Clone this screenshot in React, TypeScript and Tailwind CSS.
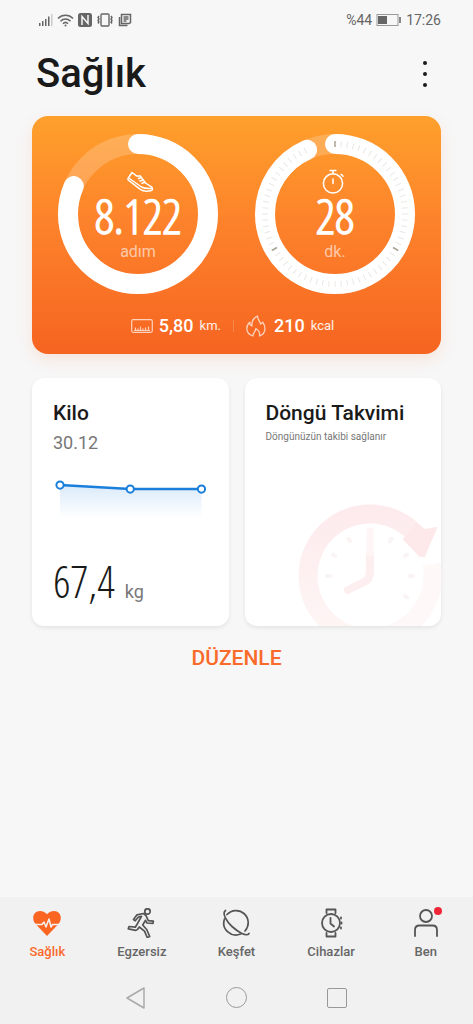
import React from 'react';

interface RingProps {
  progress: number;
  ticks?: boolean;
  label: string;
  value: string;
  unit: string;
  children: React.ReactNode;
}

const RADIUS = 70;
const LENGTH = 2 * Math.PI * RADIUS;

const Ring: React.FC<RingProps> = ({ progress, ticks, label, value, unit, children }) => (
  <div className="relative h-40 w-40" role="img" aria-label={label}>
    <svg viewBox="0 0 160 160" className="h-full w-full" fill="none">
      <circle cx="80" cy="80" r={RADIUS} stroke="#fff" strokeOpacity="0.2" strokeWidth="20" />
      <circle
        cx="80"
        cy="80"
        r={RADIUS}
        stroke="#fff"
        strokeWidth="20"
        strokeLinecap="round"
        strokeDasharray={`${LENGTH * progress} ${LENGTH}`}
        transform="rotate(-90 80 80)"
      />
      {ticks &&
        Array.from({ length: 72 }, (_, i) => i)
          .filter((i) => i <= 67)
          .map((i) => (
            <line
              key={i}
              x1="80"
              x2="80"
              y1="7"
              y2="13"
              stroke={i % 24 === 0 ? '#a9a396' : '#ebe8e4'}
              strokeWidth={i % 24 === 0 ? 1.5 : 1}
              transform={`rotate(${i * 5} 80 80)`}
            />
          ))}
    </svg>
    <div className="absolute inset-0 flex flex-col items-center pt-9 text-white">
      {children}
      <span className="font-['Open_Sans_Condensed_Light','Open_Sans_Condensed',sans-serif] text-5xl leading-[44px] font-bold">
        {value}
      </span>
      <span className="text-base leading-7 text-white/60">{unit}</span>
    </div>
  </div>
);

const ShoeIcon = () => (
  <svg viewBox="0 0 28 24" className="ml-1 h-6 w-7" fill="none" stroke="#fff" strokeWidth="1.5" strokeLinejoin="round" strokeLinecap="round">
    <path d="M6 2.5 2 8.5c-.4.7-.2 1.2.4 1.7l11.5 9c3 2 7 2.700 11.500 1.300 1.200-.5 1.500-2.300.300-3.300L19.500 13 14 5.800c-1.800.7-4 .2-5.300-1.300L6 2.500Z" />
    <path d="m3.500 8.500 12 8.500c2.500 1.500 5.500 1.800 10 1.500M12.500 8.500l3-1M14 11l3-1M16 13.200l3-1" />
  </svg>
);

const StopwatchIcon = () => (
  <svg viewBox="0 0 24 26" className="-mt-px mr-1 h-[25px] w-6" fill="none" stroke="#fff" strokeWidth="1.600" strokeLinecap="round">
    <circle cx="12" cy="15" r="10" />
    <path d="M9 1.500h6M12 2v3M20.500 5.500l2 2M12 10.500v4.500" />
  </svg>
);

const StatusBar = () => (
  <div className="flex h-10 items-center justify-between pr-8 pl-[39px] text-sm text-[#666]">
    <div className="flex items-center gap-1">
      <svg viewBox="0 0 14 14" className="h-3.5 w-3.5" fill="#666">
        <path d="M0 10h1.500v3H0zM3 8h1.500v5H3zM6 6h1.500v7H6zM9 3.500h1.500V13H9z" />
        <path d="M12 1h1.500v12H12z" fill="#ccc" />
      </svg>
      <svg viewBox="0 0 17 14" className="h-3.5 w-[17px]" fill="none" stroke="#666" strokeWidth="1.600">
        <path d="M1 5.500c4.200-4.300 10.800-4.300 15 0M3.500 8.200c3-3 7-3 10 0M6 10.700c1.500-1.500 3.500-1.500 5 0" />
        <circle cx="8.500" cy="12.500" r="1" fill="#666" stroke="none" />
      </svg>
      <svg viewBox="0 0 14 14" className="h-3.5 w-3.5" fill="none">
        <rect width="14" height="14" rx="2.500" fill="#666" />
        <path d="M4 12V3.500l6 7V2" stroke="#f7f7f7" strokeWidth="1.500" />
      </svg>
      <svg viewBox="0 0 18 14" className="h-3.5 w-[18px]" fill="none" stroke="#666" strokeWidth="1.400">
        <rect x="5" y="1" width="8" height="12" rx="1" />
        <path d="m3 3-1 1.500L3 6 2 7.500 3 9l-1 1.500M15 3l1 1.500L15 6l1 1.500L15 9l1 1.500" />
      </svg>
      <svg viewBox="0 0 14 14" className="h-3.5 w-3.5" fill="none" stroke="#666" strokeWidth="1.500">
        <path d="M3.500 1.500h9v8l-1.500 1h-7.500zM1.500 4v8.500h8M5.500 4h5M5.500 6h5M5.500 8h3" />
      </svg>
    </div>
    <div className="flex items-center gap-1">
      <span>%44</span>
      <svg viewBox="0 0 26 12" className="h-3 w-[26px]" fill="none">
        <rect x="1" y="0.500" width="21" height="11" stroke="#999" />
        <rect x="2" y="2" width="9" height="8" fill="#666" />
        <rect x="23" y="3" width="2" height="6" fill="#888" />
      </svg>
      <span>17:26</span>
    </div>
  </div>
);

const ActivityCard = () => (
  <section className="rounded-2xl bg-linear-to-b from-[#fea02c] via-[#fd822b] via-45% to-[#f66421] px-[26px] pt-[18px] pb-3 shadow-[0_6px_16px_rgba(246,100,33,0.12)]">
    <div className="flex justify-between">
      <Ring progress={0.814} label="8.122 adım" value="8.122" unit="adım">
        <ShoeIcon />
      </Ring>
      <Ring progress={0.933} ticks label="28 dk." value="28" unit="dk.">
        <StopwatchIcon />
      </Ring>
    </div>
    <div className="mt-4 flex h-8 items-center justify-center pr-2 text-white">
      <svg viewBox="0 0 22 14" className="mr-1.5 h-3.5 w-[22px]" fill="none" stroke="#fff" strokeOpacity="0.7" strokeWidth="1.200">
        <rect x="0.700" y="0.700" width="20.600" height="12.600" rx="1.500" />
        <path d="M3 11.500h16M4.500 11V8.500M7 11V9.500M9.500 11V7.500M12 11V9.500M14.500 11V8.500M17.500 11V7.500" />
      </svg>
      <span className="text-lg font-medium">5,80</span>
      <span className="ml-1.5 text-[13px] text-white/90">km.</span>
      <span className="mx-3 h-3 w-px bg-white/20" />
      <svg viewBox="0 0 20 22" className="mr-2 h-[22px] w-5" fill="none" stroke="#fff" strokeOpacity="0.7" strokeWidth="1.300" strokeLinejoin="round">
        <path d="M7 21C3 19.800.8 17 .8 13.500c0-3 1.500-5 3.200-6.200v2.500l2 1.200C5.500 6.500 7.500 3 11.500 1c-.2 3.500 2.500 4.500 3 8l2.200-1.800c3.500 5 3.300 11.300-3.200 13.800.7-3-.5-5.500-3.700-7.500.2 3-3.300 4.300-2.800 7.500Z" />
      </svg>
      <span className="text-lg font-medium">210</span>
      <span className="ml-1.5 text-[13px] text-white/90">kcal</span>
    </div>
  </section>
);

const weights = [
  { x: 7, y: 7 },
  { x: 77, y: 11 },
  { x: 148, y: 11 },
];

const WeightCard = () => (
  <section className="flex h-[248px] flex-col rounded-xl bg-white px-[21px] pt-[21px] shadow-[0_2px_4px_rgba(0,0,0,0.08)]">
    <h2 className="text-[21px] leading-7 font-medium">Kilo</h2>
    <p className="text-lg leading-8 text-[#777]">30.12</p>
    <svg viewBox="0 0 154 44" className="mt-[19px] w-full" fill="none">
      <defs>
        <linearGradient id="area" x1="0" y1="0" x2="0" y2="1">
          <stop offset="0" stopColor="#1a7fdc" stopOpacity="0.16" />
          <stop offset="1" stopColor="#1a7fdc" stopOpacity="0" />
        </linearGradient>
      </defs>
      <path d="M7 7 77 11H148V40H7Z" fill="url(#area)" />
      <path d="M7 7 77 11H148" stroke="#1a7fdc" strokeWidth="2.500" />
      {weights.map((point) => (
        <circle key={point.x} cx={point.x} cy={point.y} r="3.600" fill="#fff" stroke="#1a7fdc" strokeWidth="2" />
      ))}
    </svg>
    <p className="mt-auto mb-[18px] flex items-baseline gap-2.5">
      <span className="font-['Open_Sans_Condensed_Light','Open_Sans_Condensed',sans-serif] text-[44px] leading-[54px] font-light">
        67,4
      </span>
      <span className="text-lg text-[#777]">kg</span>
    </p>
  </section>
);

const CycleCard = () => (
  <section className="relative h-[248px] overflow-hidden rounded-xl bg-white px-[21px] pt-[21px] shadow-[0_2px_4px_rgba(0,0,0,0.08)]">
    <h2 className="text-[21px] leading-7 font-medium whitespace-nowrap">Döngü Takvimi</h2>
    <p className="text-[10px] leading-5 whitespace-nowrap text-[#777]">Döngünüzün takibi sağlanır</p>
    <svg viewBox="0 0 143 122" className="absolute right-0 bottom-0 h-[122px] w-[143px]" fill="none">
      <defs>
        <linearGradient id="dial" gradientUnits="userSpaceOnUse" x1="0" y1="0" x2="0" y2="122">
          <stop offset="0" stopColor="#fdeaec" />
          <stop offset="1" stopColor="#fef5f5" />
        </linearGradient>
      </defs>
      <path d="M72 134A62 62 0 1 1 121 34" stroke="url(#dial)" strokeWidth="19" />
      <path d="M134 60A63 63 0 0 1 72 134" stroke="#fef8f8" strokeWidth="19" />
      <path d="M138 24 126 52 122 52 106 35 118 20 127 26Z" fill="#fde8ea" stroke="#fde8ea" strokeWidth="2" strokeLinejoin="round" />
      <path d="M72 50V68Q72 75 66 78L50 86" stroke="#fdeeef" strokeWidth="8" strokeLinecap="round" strokeLinejoin="round" />
      <path d="M72 27v22" stroke="#fef6f6" strokeWidth="7" strokeLinecap="round" />
      {[-90, -60, -30, 30, 60, 90, 120].map((angle) => (
        <path key={angle} d="M72 29v3" stroke="#fbf4f4" strokeWidth="4" strokeLinecap="round" transform={`rotate(${angle} 72 72)`} />
      ))}
    </svg>
  </section>
);

const HeartIcon = () => (
  <svg viewBox="0 0 30 30" className="h-[30px] w-[30px]" fill="none">
    <path d="M15 28 3.500 16C-1 10.500 1.500 3 8 3c3 0 5.500 1.300 7 3.300C16.500 4.300 19 3 22 3c6.500 0 9 7.500 4.500 13L15 28Z" fill="#fb6522" />
    <path d="M2 16.500h8l2-2.500 2 5 3-8 2 8 1.500-2.500H28" stroke="#f1f1f1" strokeWidth="1.500" strokeLinejoin="round" />
  </svg>
);

const RunnerIcon = () => (
  <svg viewBox="0 0 30 30" className="h-[30px] w-[30px]" fill="none" stroke="#555" strokeWidth="1.700" strokeLinejoin="round" strokeLinecap="round">
    <circle cx="20.500" cy="3.500" r="2.700" />
    <path d="M16.500 5.500 10 6.800 6.500 11.500l1.700 1.300L11.500 9l3-.7-4 7.200-2.200 3.700L2 18.500l-.7 2.300 7.500 1.500c1.500 0 2.200-1 3.500-3.300l5.200 4.200 2.700 6.300 2.500-1-3-7-4-4.500 2.800-4.700 1.500 2.700 6 .3.300-2.100-5-.5-2.300-5Z" />
  </svg>
);

const DiscoverIcon = () => (
  <svg viewBox="0 0 30 30" className="h-[30px] w-[30px]" fill="none" stroke="#555" strokeWidth="1.700" strokeLinecap="round">
    <path d="M6 6.500A12 12 0 0 1 24 23M20 25.800A12 12 0 0 1 3.500 11" />
    <path d="M4.500 2.500C.5 5.500 6 14 11 18.500S25.500 29.500 28 25.500" />
  </svg>
);

const WatchIcon = () => (
  <svg viewBox="0 0 30 30" className="h-[30px] w-[30px]" fill="none" stroke="#555" strokeWidth="1.800" strokeLinecap="round" strokeLinejoin="round">
    <circle cx="15" cy="15" r="9" />
    <path d="M10.500 5V1.500h9V5M10.500 25v3.500h9V25M14.500 10v5.500l3.500 3M25 9.500v1M25.500 14.500v1M25 19.500v1" />
  </svg>
);

const ProfileIcon = () => (
  <span className="relative">
    <svg viewBox="0 0 30 30" className="h-[30px] w-[30px]" fill="none" stroke="#555" strokeWidth="1.800" strokeLinecap="round">
      <circle cx="15" cy="8" r="6" />
      <path d="M4 28v-6c0-2.800 1.500-4.500 4.500-4.500h13c3 0 4.500 1.700 4.500 4.500v6" />
    </svg>
    <span className="absolute -top-px -right-px h-2 w-2 rounded-full bg-[#ee2637]" />
  </span>
);

const tabs = [
  { label: 'Sağlık', icon: <HeartIcon />, active: true },
  { label: 'Egzersiz', icon: <RunnerIcon /> },
  { label: 'Keşfet', icon: <DiscoverIcon /> },
  { label: 'Cihazlar', icon: <WatchIcon /> },
  { label: 'Ben', icon: <ProfileIcon /> },
];

export default function App() {
  return (
    <div className="flex min-h-screen flex-col bg-[#f7f7f7] font-[Roboto,sans-serif] text-[#1a1a1a]">
      <StatusBar />
      <header className="flex h-[76px] items-center justify-between pr-8 pl-9">
        <h1 className="pb-2 text-[40px] leading-[48px] font-medium">Sağlık</h1>
        <button type="button" aria-label="Menü" className="flex h-10 w-8 items-center justify-center pb-2">
          <svg viewBox="0 0 6 28" className="h-7 w-1.5" fill="#1a1a1a">
            <circle cx="3" cy="3" r="2" />
            <circle cx="3" cy="14" r="2" />
            <circle cx="3" cy="25" r="2" />
          </svg>
        </button>
      </header>

      <main className="flex flex-1 flex-col px-8">
        <ActivityCard />
        <div className="mt-6 grid grid-cols-2 gap-4">
          <WeightCard />
          <CycleCard />
        </div>
        <button type="button" className="mt-4 self-center text-[21px] leading-8 font-medium text-[#fa6a2a]">
          DÜZENLE
        </button>
      </main>

      <footer className="bg-[#f1f1f1]">
        <nav className="grid h-[74px] grid-cols-5 pt-[11px]">
          {tabs.map((tab) => (
            <a
              key={tab.label}
              href="#"
              className={`flex flex-col items-center gap-1 text-[13px] leading-5 font-medium ${tab.active ? 'text-[#fa6a2a]' : 'text-[#666]'}`}
            >
              {tab.icon}
              {tab.label}
            </a>
          ))}
        </nav>
        <div className="flex h-[53px] items-center justify-center gap-20">
          <button type="button" aria-label="Geri">
            <svg viewBox="0 0 20 22" className="h-[22px] w-5" fill="none" stroke="#aaa" strokeWidth="1.500" strokeLinejoin="round">
              <path d="M18 1v20L1 11Z" />
            </svg>
          </button>
          <button type="button" aria-label="Ana ekran" className="h-[21px] w-[21px] rounded-full border border-[#999]" />
          <button type="button" aria-label="Son uygulamalar" className="h-5 w-5 rounded-xs border border-[#999]" />
        </div>
      </footer>
    </div>
  );
}
